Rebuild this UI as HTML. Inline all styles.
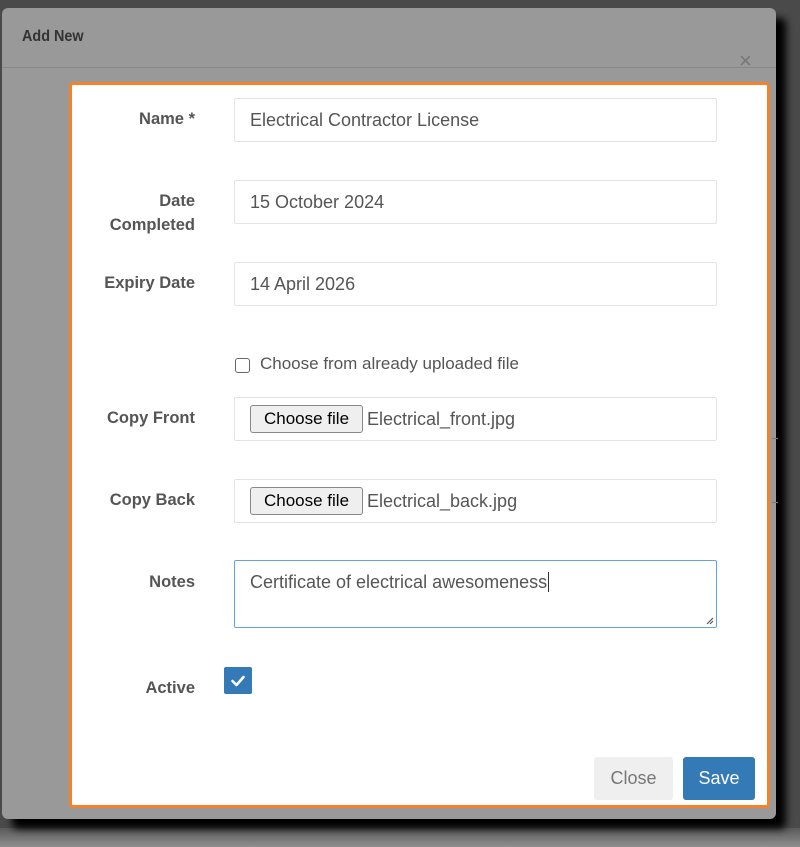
<!DOCTYPE html>
<html><head><style>
*{box-sizing:border-box;margin:0;padding:0}
body{width:800px;height:847px;background:#4a4a4a;position:relative;overflow:hidden;font-family:"Liberation Sans",sans-serif}
.shadowb{position:absolute;left:0;top:828px;width:800px;height:19px;background:linear-gradient(#5a5a5a,#8e8e8e)}
.modal{position:absolute;left:2px;top:8px;width:774px;height:811px;background:#999;border-radius:6px;box-shadow:10px 10px 8px #000}
.hdr{position:absolute;left:0;top:0;width:774px;height:60px;border-bottom:1px solid #888}
.hdr span{position:absolute;left:20px;top:20px;font-size:16px;color:#333;font-weight:bold;transform:scaleX(.9);transform-origin:left}
.x{position:absolute;left:737px;top:40px;font-size:22px;color:#777}
.ghost{position:absolute;left:770px;top:430px;width:6px;height:65px;border-top:1px solid #7a7a7a;border-bottom:1px solid #7a7a7a}
.box{position:absolute;left:69px;top:82px;width:701px;height:726px;background:#fff;border:3px solid #f5822a;border-radius:4px}
.lbl{position:absolute;right:572px;text-align:right;font-weight:bold;font-size:16.5px;color:#555;line-height:24px}
.inp{position:absolute;left:162px;width:483px;height:44px;border:1px solid #e3e3e3;border-radius:2px;font-size:18px;color:#555;padding:10px 15px;line-height:22px}
.fbtn{position:absolute;left:15px;top:7px;width:113px;height:28px;border:1px solid #888;border-radius:3px;background:#efefef;font-size:17px;color:#000;text-align:center;line-height:26px}
.fname{position:absolute;left:132px;top:10px}
.btn{position:absolute;top:672px;height:43px;border-radius:3px;font-size:18px;line-height:43px;text-align:center}
</style></head><body>
<div class="shadowb"></div>
<div class="modal">
<div class="hdr"><span>Add New</span></div>
<div class="x">×</div>
<div class="ghost"></div>
</div>
<div class="box">
<div class="lbl" style="top:22px">Name *</div>
<div class="inp" style="top:13px">Electrical Contractor License</div>
<div class="lbl" style="top:104px">Date<br>Completed</div>
<div class="inp" style="top:95px">15 October 2024</div>
<div class="lbl" style="top:186px">Expiry Date</div>
<div class="inp" style="top:177px">14 April 2026</div>
<div style="position:absolute;left:163px;top:273px;width:15px;height:15px;border:1.5px solid #666;border-radius:3px"></div>
<div style="position:absolute;left:188px;top:269px;font-size:17px;color:#555">Choose from already uploaded file</div>
<div class="lbl" style="top:321px">Copy Front</div>
<div class="inp" style="top:312px;padding:0"><div class="fbtn">Choose file</div><div class="fname">Electrical_front.jpg</div></div>
<div class="lbl" style="top:403px">Copy Back</div>
<div class="inp" style="top:394px;padding:0"><div class="fbtn">Choose file</div><div class="fname">Electrical_back.jpg</div></div>
<div class="lbl" style="top:485px">Notes</div>
<div class="inp" style="top:475px;height:68px;border-color:#66a3dd">Certificate of electrical awesomeness<span style="border-left:1px solid #333;margin-left:1px"></span>
<svg style="position:absolute;right:2px;bottom:2px" width="10" height="10"><path d="M9 3L3 9M9 6L6 9" stroke="#555" stroke-width="1.2"/></svg></div>
<div class="lbl" style="top:591px">Active</div>
<div style="position:absolute;left:152px;top:582px;width:28px;height:27px;background:#337ab7;border-radius:2px">
<svg width="28" height="27"><path d="M8.5 14l4 4 7-8" stroke="#fff" stroke-width="2.6" fill="none" stroke-linecap="round" stroke-linejoin="round"/></svg></div>
<div class="btn" style="left:522px;width:79px;background:#efefef;color:#777">Close</div>
<div class="btn" style="left:611px;width:72px;background:#337ab7;color:#fff">Save</div>
</div>
</body></html>
